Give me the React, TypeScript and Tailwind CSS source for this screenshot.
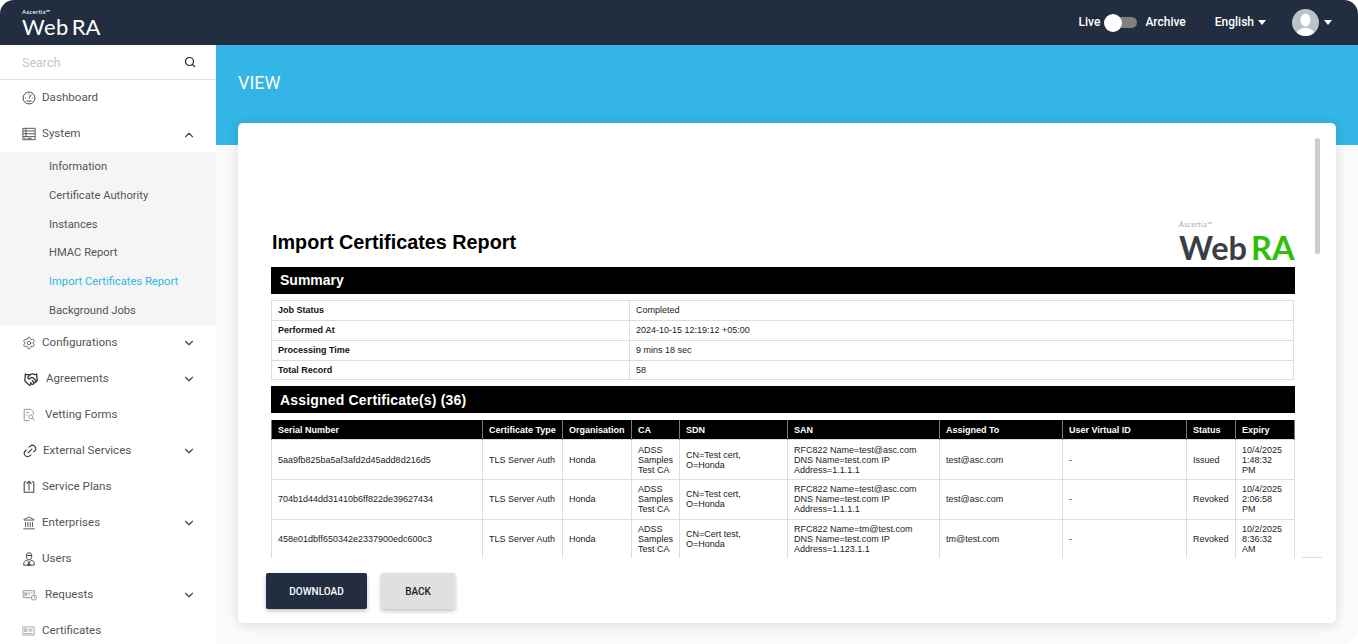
import React from "react";
import { ChevronDown, ChevronUp, Search, Settings, Handshake, Link2, Landmark } from "lucide-react";

const Ico = ({ children }: { children: React.ReactNode }) => (
  <svg viewBox="0 0 16 16" fill="none" stroke="#444" strokeWidth="1" className="w-[14px] h-[14px] shrink-0">
    {children}
  </svg>
);

const DashIcon = () => (
  <Ico>
    <circle cx="8" cy="8" r="6.800" strokeWidth="1.100" />
    <path d="M8 8.500 10.500 4M3.500 8h1M8 3v1M12 8h.8M5 11.500h6" strokeWidth="1.100" />
  </Ico>
);
const SystemIcon = () => (
  <Ico>
    <path d="M1 1.500h14v9.500H1zM1 4.500h14M1 7.700h14M1 11v3.500h14V11M4.500 1.500V11M6 13h5M2.500 13h1.500" />
  </Ico>
);
const VettingIcon = () => (
  <Ico>
    <path d="M10 1.500H2.500v13h6M10 1.500l3 3v3M5 5h3M5 8h1.500" stroke="#888" />
    <circle cx="10" cy="10" r="2.200" stroke="#888" />
    <path d="M11.600 11.600 14.500 14.500" stroke="#888" />
  </Ico>
);
const PlansIcon = () => (
  <Ico>
    <path d="M5 2H3.500a1 1 0 0 0-1 1v11h11V3a1 1 0 0 0-1-1H11M8 12V1.500M5.200 4.500 8 1.500l2.800 3" strokeWidth="1.200" />
  </Ico>
);
const UserIcon = () => (
  <Ico>
    <path d="M5 3.500c0-1.500 1-2.500 3-2.500s3 1 3 2.500V6c0 1.500-1.200 3-3 3S5 7.500 5 6zM5 4h6" strokeWidth="1.100" />
    <path d="M2 15v-2c0-2 1.500-3 3.500-3.500L8 12l2.500-2.500c2 .5 3.500 1.500 3.500 3.500v2z" strokeWidth="1.100" />
    <path d="M8 11.500 6.500 15h3z" fill="#444" />
  </Ico>
);
const RequestIcon = () => (
  <svg viewBox="0 0 18 14" fill="none" stroke="#888" strokeWidth="1" className="w-[16px] h-[12px] shrink-0">
    <path d="M10.500 10H1V2h13v4M3 4.500h2v3H3zM7 4.500h1v3M10 4.500h2" />
    <circle cx="13.500" cy="10" r="3" />
    <path d="M13.500 8.500V10h1.200" />
  </svg>
);
const CertIcon = () => (
  <svg viewBox="0 0 16 12" fill="none" stroke="#999" strokeWidth="1" className="w-[13px] h-[10px] shrink-0">
    <path d="M1 1h14v10H1zM3 3.500h3v3H3zM8 4h5M8 6h5M3 9h10" />
  </svg>
);

const lucideCls = "w-[14px] h-[14px] shrink-0 text-[#444]";

const subItems = ["Information", "Certificate Authority", "Instances", "HMAC Report", "Import Certificates Report", "Background Jobs"];

const lowerItems = [
  { label: "Configurations", icon: <Settings className={lucideCls} strokeWidth={1.300} />, gap: "gap-[6px]", more: true },
  { label: "Agreements", icon: <Handshake className="w-[18px] h-[15px] shrink-0 text-[#333]" strokeWidth={2} />, gap: "gap-[6px]", more: true },
  { label: "Vetting Forms", icon: <VettingIcon />, gap: "gap-[9px]", more: false },
  { label: "External Services", icon: <Link2 className="w-[16px] h-[16px] shrink-0 text-[#333] -rotate-45" strokeWidth={1.600} />, gap: "gap-[5px]", more: true },
  { label: "Service Plans", icon: <PlansIcon />, gap: "gap-[6px]", more: false },
  { label: "Enterprises", icon: <Landmark className={lucideCls} strokeWidth={1.500} />, gap: "gap-[6px]", more: true },
  { label: "Users", icon: <UserIcon />, gap: "gap-[6px]", more: false },
  { label: "Requests", icon: <RequestIcon />, gap: "gap-[7px]", more: true },
  { label: "Certificates", icon: <CertIcon />, gap: "gap-[7px]", more: false },
];

const summary = [
  ["Job Status", "Completed"],
  ["Performed At", "2024-10-15 12:19:12 +05:00"],
  ["Processing Time", "9 mins 18 sec"],
  ["Total Record", "58"],
];

const columns = [
  ["Serial Number", "w-[211px]"],
  ["Certificate Type", "w-[80px]"],
  ["Organisation", "w-[69px]"],
  ["CA", "w-[48px]"],
  ["SDN", "w-[108px]"],
  ["SAN", "w-[152px]"],
  ["Assigned To", "w-[123px]"],
  ["User Virtual ID", "w-[124px]"],
  ["Status", "w-[49px]"],
  ["Expiry", "w-[59px]"],
];

const certs = [
  ["5aa9fb825ba5af3afd2d45add8d216d5", "CN=Test cert, O=Honda", "RFC822 Name=test@asc.com DNS Name=test.com IP Address=1.1.1.1", "test@asc.com", "Issued", "10/4/2025 1:48:32 PM"],
  ["704b1d44dd31410b6ff822de39627434", "CN=Test cert, O=Honda", "RFC822 Name=test@asc.com DNS Name=test.com IP Address=1.1.1.1", "test@asc.com", "Revoked", "10/4/2025 2:06:58 PM"],
  ["458e01dbff650342e2337900edc600c3", "CN=Cert test, O=Honda", "RFC822 Name=tm@test.com DNS Name=test.com IP Address=1.123.1.1", "tm@test.com", "Revoked", "10/2/2025 8:36:32 AM"],
];

const Caret = ({ cls }: { cls: string }) => (
  <span className={`${cls} w-0 h-0 border-x-[4px] border-x-transparent border-t-[5px] border-t-white`} />
);

const HeaderLogo = () => (
  <div className="font-['Lato',sans-serif] text-white self-start pt-[8px]">
    <div className="text-[6px] leading-[7px] tracking-[0.300px]">Ascertia™</div>
    <div className="mt-[1px] text-[22px] leading-[22px] font-normal whitespace-nowrap">
      <span className="tracking-[0.400px]">Web</span><span className="ml-[3px]">RA</span>
    </div>
  </div>
);

const ReportLogo = () => (
  <div className="font-['Lato',sans-serif] w-[116px] -ml-[2px]">
    <div className="text-[7px] leading-[6px] tracking-[0.400px] text-[#aaa]">Ascertia™</div>
    <div className="mt-[4px] text-[32.500px] leading-[33px] font-bold text-[#3a3f47] whitespace-nowrap">
      Web<span className="ml-[4px] text-[#2fbf0a]">RA</span>
    </div>
  </div>
);

const Bar = ({ children, cls }: { children: React.ReactNode; cls: string }) => (
  <div className={`h-[27px] bg-black text-white font-bold text-[14px] px-[9px] ${cls}`}>{children}</div>
);

export default function App() {
  return (
    <div className="w-[1358px] h-[644px] rounded-[14px] overflow-hidden bg-[#fafafa] font-['Roboto',sans-serif]">
      <header className="h-[45px] bg-[#222e3f] flex items-center pl-[22px] pr-[26px] text-white text-[12px] font-medium">
        <HeaderLogo />
        <div className="ml-auto flex items-center">
          <span className="pb-[2px]">Live</span>
          <span className="relative ml-[13px] w-[24px] h-[11px] rounded-full bg-[#808080]">
            <span className="absolute -left-[9px] -top-[3.500px] w-[18px] h-[18px] rounded-full bg-white" />
          </span>
          <span className="ml-[8px] pb-[2px]">Archive</span>
          <span className="ml-[29px] pb-[2px]">English</span>
          <Caret cls="ml-[4px]" />
          <span className="ml-[26px] w-[27px] h-[27px] rounded-full bg-[#b9c4ca] overflow-hidden flex justify-center">
            <svg viewBox="0 0 27 27" className="w-[27px] h-[27px]">
              <ellipse cx="13.500" cy="11" rx="5" ry="6.500" fill="#fff" />
              <path d="M4 27c0-5 4-7 7-8h5c3 1 7 3 7 8z" fill="#fff" />
            </svg>
          </span>
          <Caret cls="ml-[5px]" />
        </div>
      </header>

      <div className="flex h-[599px]">
        <aside className="w-[216px] shrink-0 bg-white overflow-hidden text-[11.600px] text-[#555]">
          <div className="h-[35px] border-b border-[#ddd] flex items-center justify-between pl-[22px] pr-[20px]">
            <span className="pt-[2px] text-[12.500px] text-[#c0c8d0]">Search</span>
            <Search className="w-[12px] h-[12px] text-[#222]" strokeWidth={2.400} />
          </div>
          <div className="h-[35px] flex items-center gap-[6px] pl-[22px]">
            <DashIcon />
            <span>Dashboard</span>
          </div>
          <div className="h-[37px] flex items-center gap-[6px] pl-[22px] pr-[20px]">
            <SystemIcon />
            <span>System</span>
            <ChevronUp className="ml-auto mt-[3px] w-[14px] h-[14px] text-[#444]" />
          </div>
          <ul className="h-[173px] bg-[#f5f5f5] pl-[49px] pt-px text-[11.200px]">
            {subItems.map((s) => (
              <li key={s} className={`h-[28.800px] leading-[28.800px] ${s.startsWith("Import") ? "text-[#33b5e5]" : ""}`}>{s}</li>
            ))}
          </ul>
          {lowerItems.map((it) => (
            <div key={it.label} className={`h-[36px] flex items-center pl-[22px] pr-[20px] ${it.gap}`}>
              {it.icon}
              <span>{it.label}</span>
              {it.more && <ChevronDown className="ml-auto w-[14px] h-[14px] text-[#444]" />}
            </div>
          ))}
        </aside>

        <main className="flex-1 min-w-0">
          <div className="h-[100px] bg-[#33b5e5] pl-[22px] pt-[28px] text-white text-[18px] leading-[20px]">VIEW</div>
          <div className="ml-[22px] mr-[22px] -mt-[22px] h-[500px] bg-white rounded-[5px] shadow-[0_2px_12px_rgba(0,0,0,0.13)]">
            <div className="flex h-[435px] overflow-hidden">
              <div className="w-[1057px] pl-[33px] pt-[98px] font-['Liberation_Sans',Arial,sans-serif] text-[#222]">
                <div className="h-[46px] flex justify-between items-start">
                  <h1 className="mt-[8px] ml-[1px] text-[19.800px] leading-[26px] font-bold text-black">Import Certificates Report</h1>
                  <ReportLogo />
                </div>
                <Bar cls="leading-[27px]">Summary</Bar>
                <table className="mt-[6px] w-[1023px] table-fixed border-collapse text-[9px] leading-[10px]">
                  <colgroup>
                    <col className="w-[358px]" />
                    <col />
                  </colgroup>
                  <tbody>
                    {summary.map(([k, v]) => (
                      <tr key={k} className="h-[19.850px]">
                        <td className="border border-[#ddd] px-[6px] font-bold text-[#111]">{k}</td>
                        <td className="border border-[#ddd] px-[6px]">{v}</td>
                      </tr>
                    ))}
                  </tbody>
                </table>
                <div className="mt-[6px]">
                  <Bar cls="leading-[28px] tracking-[0.180px]">Assigned Certificate(s) (36)</Bar>
                </div>
                <table className="mt-[6.500px] w-[1023px] table-fixed border-collapse text-[9px] leading-[10px]">
                  <colgroup>
                    {columns.map(([h, w]) => <col key={h} className={w} />)}
                  </colgroup>
                  <thead>
                    <tr className="h-[20px] bg-black text-white">
                      {columns.map(([h]) => (
                        <th key={h} className="border-x border-[#777] px-[6px] text-left font-bold whitespace-nowrap">{h}</th>
                      ))}
                    </tr>
                  </thead>
                  <tbody>
                    {certs.map((c) => (
                      <tr key={c[0]} className="h-[39.700px]">
                        <td className="border border-[#ddd] px-[6px]">{c[0]}</td>
                        <td className="border border-[#ddd] px-[6px] whitespace-nowrap">TLS Server Auth</td>
                        <td className="border border-[#ddd] px-[6px]">Honda</td>
                        <td className="border border-[#ddd] px-[6px]">ADSS Samples Test CA</td>
                        <td className="border border-[#ddd] px-[6px]">{c[1]}</td>
                        <td className="border border-[#ddd] px-[6px]">{c[2]}</td>
                        <td className="border border-[#ddd] px-[6px]">{c[3]}</td>
                        <td className="border border-[#ddd] px-[6px]">-</td>
                        <td className="border border-[#ddd] px-[6px]">{c[4]}</td>
                        <td className="border border-[#ddd] pl-[6px] pr-[9px]">{c[5]}</td>
                      </tr>
                    ))}
                  </tbody>
                </table>
              </div>
              <div className="flex-1 flex flex-col">
                <div className="mt-[15px] ml-[20px] w-[5px] h-[116px] rounded-full bg-[#ccc]" />
                <div className="mt-auto ml-[7px] w-[20px] h-px bg-[#ddd]" />
              </div>
            </div>
            <div className="pl-[28px] pt-[15px] flex gap-[14px] text-[10px] font-medium">
              <button className="w-[101px] h-[36px] rounded-[2px] bg-[#222e3f] text-white shadow-[0_2px_4px_rgba(0,0,0,0.25)]">DOWNLOAD</button>
              <button className="w-[74px] h-[36px] rounded-[2px] bg-[#e0e0e0] text-[#222] shadow-[0_2px_4px_rgba(0,0,0,0.25)]">BACK</button>
            </div>
          </div>
        </main>
      </div>
    </div>
  );
}
